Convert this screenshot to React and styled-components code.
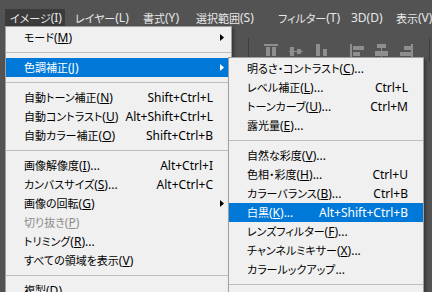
import styled, { createGlobalStyle } from "styled-components";

const GlobalStyle = createGlobalStyle`
  html, body {
    margin: 0;
    padding: 0;
  }
  body {
    width: 432px;
    height: 292px;
    overflow: hidden;
    background: #535353;
    font-family: "Noto Sans", "Noto Sans CJK JP", sans-serif;
  }
`;

// Window layout
const Window = styled.div`
  width: 432px;
  height: 292px;
  display: flex;
  flex-direction: column;
  background: #535353;
  overflow: hidden;
`;

const MenuBar = styled.div`
  height: 26px;
  display: flex;
  align-items: flex-end;
  gap: 5px;
  padding-left: 5px;
  box-sizing: border-box;
  background: #535353;
`;

const BarItem = styled.div`
  flex: none;
  width: ${(p) => p.$w}px;
  height: 17px;
  box-sizing: border-box;
  padding-left: 5px;
  display: flex;
  align-items: center;
  font-size: 12px;
  color: #e8e8e8;
  white-space: nowrap;
  background: ${(p) => (p.$active ? "#3b3b3b" : "transparent")};
`;

const Workspace = styled.div`
  position: relative;
  flex: 1;
  display: flex;
  flex-direction: column;
`;

const OptionsBar = styled.div`
  height: 36px;
  display: flex;
  align-items: flex-start;
  padding-left: 248px;
  padding-top: 12px;
  box-sizing: border-box;
  background: #535353;
`;

const BarSep = styled.div`
  width: 1px;
  height: 24px;
  background: #3e3e3e;
  margin-right: ${(p) => p.$mr || 0}px;
`;

const IconBox = styled.svg`
  flex: none;
  margin-top: 6px;
  margin-right: ${(p) => p.$mr || 0}px;
`;

const Panel = styled.div`
  flex: 1;
  background: #535353;
`;

// Menus
const Menu = styled.div`
  position: absolute;
  left: ${(p) => p.$x}px;
  top: ${(p) => p.$y}px;
  width: ${(p) => p.$w}px;
  box-sizing: border-box;
  padding: 1px 0 40px;
  background: #f0f0f0;
  border: 1px solid #a0a0a0;
  box-shadow: 2px 2px 3px rgba(0, 0, 0, 0.35);
`;

const Row = styled.div`
  position: relative;
  height: 19px;
  display: flex;
  align-items: center;
  padding: 0 ${(p) => p.$pr}px 0 ${(p) => p.$pl}px;
  font-size: 12px;
  white-space: nowrap;
  background: ${(p) => (p.$active ? "#0078d7" : "transparent")};
  color: ${(p) => (p.$active ? "#ffffff" : p.$disabled ? "#8d8d8d" : "#000000")};
`;

const Label = styled.span`
  flex: 1;
`;

const Jp = styled.span`
  font-family: "Noto Sans CJK JP", sans-serif;
  font-size: ${(p) => p.$size || 11}px;
  font-feature-settings: "palt" 1;
`;

const Key = styled.span`
  text-decoration: underline;
  text-underline-offset: 1px;
`;

const Shortcut = styled.span`
  flex: none;
`;

const Arrow = styled.svg`
  position: absolute;
  right: 7px;
  top: 6px;
`;

const Separator = styled.div`
  height: 11px;
  display: flex;
  align-items: center;
  &::after {
    content: "";
    flex: 1;
    height: 1px;
    background: #bdbdbd;
  }
`;

const CJK = /([\u3000-\u30ff\u4e00-\u9fff\uff00-\uffef]+)/;

function Txt({ text, size }) {
  return text.split(CJK).map((s, i) =>
    i % 2 ? (
      <Jp key={i} $size={size}>
        {s}
      </Jp>
    ) : (
      s
    )
  );
}

const barItems = [
  { label: "イメージ(I)", w: 60, active: true },
  { label: "レイヤー(L)", w: 63 },
  { label: "書式(Y)", w: 48 },
  { label: "選択範囲(S)", w: 77 },
  { label: "フィルター(T)", w: 68 },
  { label: "3D(D)", w: 40 },
  { label: "表示(V)", w: 50 },
];

const mainItems = [
  { label: "モード", k: "M", sub: true },
  { sep: true },
  { label: "色調補正", k: "J", sub: true, active: true },
  { sep: true },
  { label: "自動トーン補正", k: "N", sc: "Shift+Ctrl+L" },
  { label: "自動コントラスト", k: "U", sc: "Alt+Shift+Ctrl+L" },
  { label: "自動カラー補正", k: "O", sc: "Shift+Ctrl+B" },
  { sep: true },
  { label: "画像解像度", k: "I", dots: true, sc: "Alt+Ctrl+I" },
  { label: "カンバスサイズ", k: "S", dots: true, sc: "Alt+Ctrl+C" },
  { label: "画像の回転", k: "G", sub: true },
  { label: "切り抜き", k: "P", disabled: true },
  { label: "トリミング", k: "R", dots: true },
  { label: "すべての領域を表示", k: "V" },
  { sep: true },
  { label: "複製", k: "D", dots: true },
];

const subItems = [
  { label: "明るさ・コントラスト", k: "C", dots: true },
  { label: "レベル補正", k: "L", dots: true, sc: "Ctrl+L" },
  { label: "トーンカーブ", k: "U", dots: true, sc: "Ctrl+M" },
  { label: "露光量", k: "E", dots: true },
  { sep: true },
  { label: "自然な彩度", k: "V", dots: true },
  { label: "色相・彩度", k: "H", dots: true, sc: "Ctrl+U" },
  { label: "カラーバランス", k: "B", dots: true, sc: "Ctrl+B" },
  { label: "白黒", k: "K", dots: true, sc: "Alt+Shift+Ctrl+B", active: true },
  { label: "レンズフィルター", k: "F", dots: true },
  { label: "チャンネルミキサー", k: "X", dots: true },
  { label: "カラールックアップ...", dots: false },
  { sep: true },
  { label: "階調の反転", k: "I", sc: "Ctrl+I" },
];

function MenuRows({ items, pl, pr }) {
  return items.map((it, i) =>
    it.sep ? (
      <Separator key={i} />
    ) : (
      <Row key={i} $pl={pl} $pr={pr} $active={it.active} $disabled={it.disabled}>
        <Label>
          <Txt text={it.label} />
          {it.k && (
            <>
              (<Key>{it.k}</Key>)
            </>
          )}
          {it.dots && "..."}
        </Label>
        {it.sc && <Shortcut>{it.sc}</Shortcut>}
        {it.sub && (
          <Arrow width="4" height="7" viewBox="0 0 4 7">
            <path d="M0 0L4 3.5L0 7Z" fill={it.active ? "#fff" : "#000"} />
          </Arrow>
        )}
      </Row>
    )
  );
}

const ic = "#8e8e8e";

function AlignTop({ mr }) {
  return (
    <IconBox $mr={mr} width="14" height="14" viewBox="0 0 14 14">
      <rect x="0" y="0" width="14" height="2" fill={ic} />
      <rect x="2" y="3" width="4" height="9" fill={ic} />
      <rect x="8" y="3" width="4" height="9" fill={ic} />
    </IconBox>
  );
}

function AlignMiddle({ mr }) {
  return (
    <IconBox $mr={mr} width="14" height="14" viewBox="0 0 14 14">
      <rect x="1" y="3" width="4" height="9" fill={ic} />
      <rect x="8" y="5" width="4" height="5" fill={ic} />
      <rect x="0" y="7" width="14" height="1" fill={ic} />
    </IconBox>
  );
}

function AlignBottom({ mr }) {
  return (
    <IconBox $mr={mr} width="12" height="14" viewBox="0 0 12 14">
      <rect x="0" y="0" width="4" height="12" fill={ic} />
      <rect x="7" y="5" width="4" height="7" fill={ic} />
      <rect x="0" y="13" width="12" height="1" fill={ic} />
    </IconBox>
  );
}

function AlignLeft({ mr }) {
  return (
    <IconBox $mr={mr} width="14" height="14" viewBox="0 0 14 14">
      <rect x="0" y="0" width="2" height="14" fill={ic} />
      <rect x="3" y="2" width="11" height="4" fill={ic} />
      <rect x="3" y="8" width="7" height="4" fill={ic} />
    </IconBox>
  );
}

function AlignCenter({ mr }) {
  return (
    <IconBox $mr={mr} width="13" height="14" viewBox="0 0 13 14">
      <rect x="2" y="0" width="9" height="4" fill={ic} />
      <rect x="0" y="7" width="13" height="5" fill={ic} />
      <rect x="6" y="0" width="1" height="14" fill={ic} />
    </IconBox>
  );
}

function AlignRight({ mr }) {
  return (
    <IconBox $mr={mr} width="13" height="14" viewBox="0 0 13 14">
      <rect x="4" y="2" width="8" height="4" fill={ic} />
      <rect x="0" y="8" width="12" height="4" fill={ic} />
      <rect x="11" y="0" width="2" height="14" fill={ic} />
    </IconBox>
  );
}

export default function App() {
  return (
    <Window>
      <GlobalStyle />
      <MenuBar>
        {barItems.map((b) => (
          <BarItem key={b.label} $w={b.w} $active={b.active}>
            <Txt text={b.label} size={11} />
          </BarItem>
        ))}
      </MenuBar>
      <Workspace>
        <OptionsBar>
          <BarSep $mr={15} />
          <AlignTop mr={11} />
          <AlignMiddle mr={13} />
          <AlignBottom mr={22} />
          <AlignLeft mr={11} />
          <AlignCenter mr={12} />
          <AlignRight mr={16} />
          <BarSep />
        </OptionsBar>
        <Panel />
        <Menu $x={5} $y={0} $w={227}>
          <MenuRows items={mainItems} pl={18} pr={18} />
        </Menu>
        <Menu $x={228} $y={31} $w={196}>
          <MenuRows items={subItems} pl={18} pr={15} />
        </Menu>
      </Workspace>
    </Window>
  );
}
